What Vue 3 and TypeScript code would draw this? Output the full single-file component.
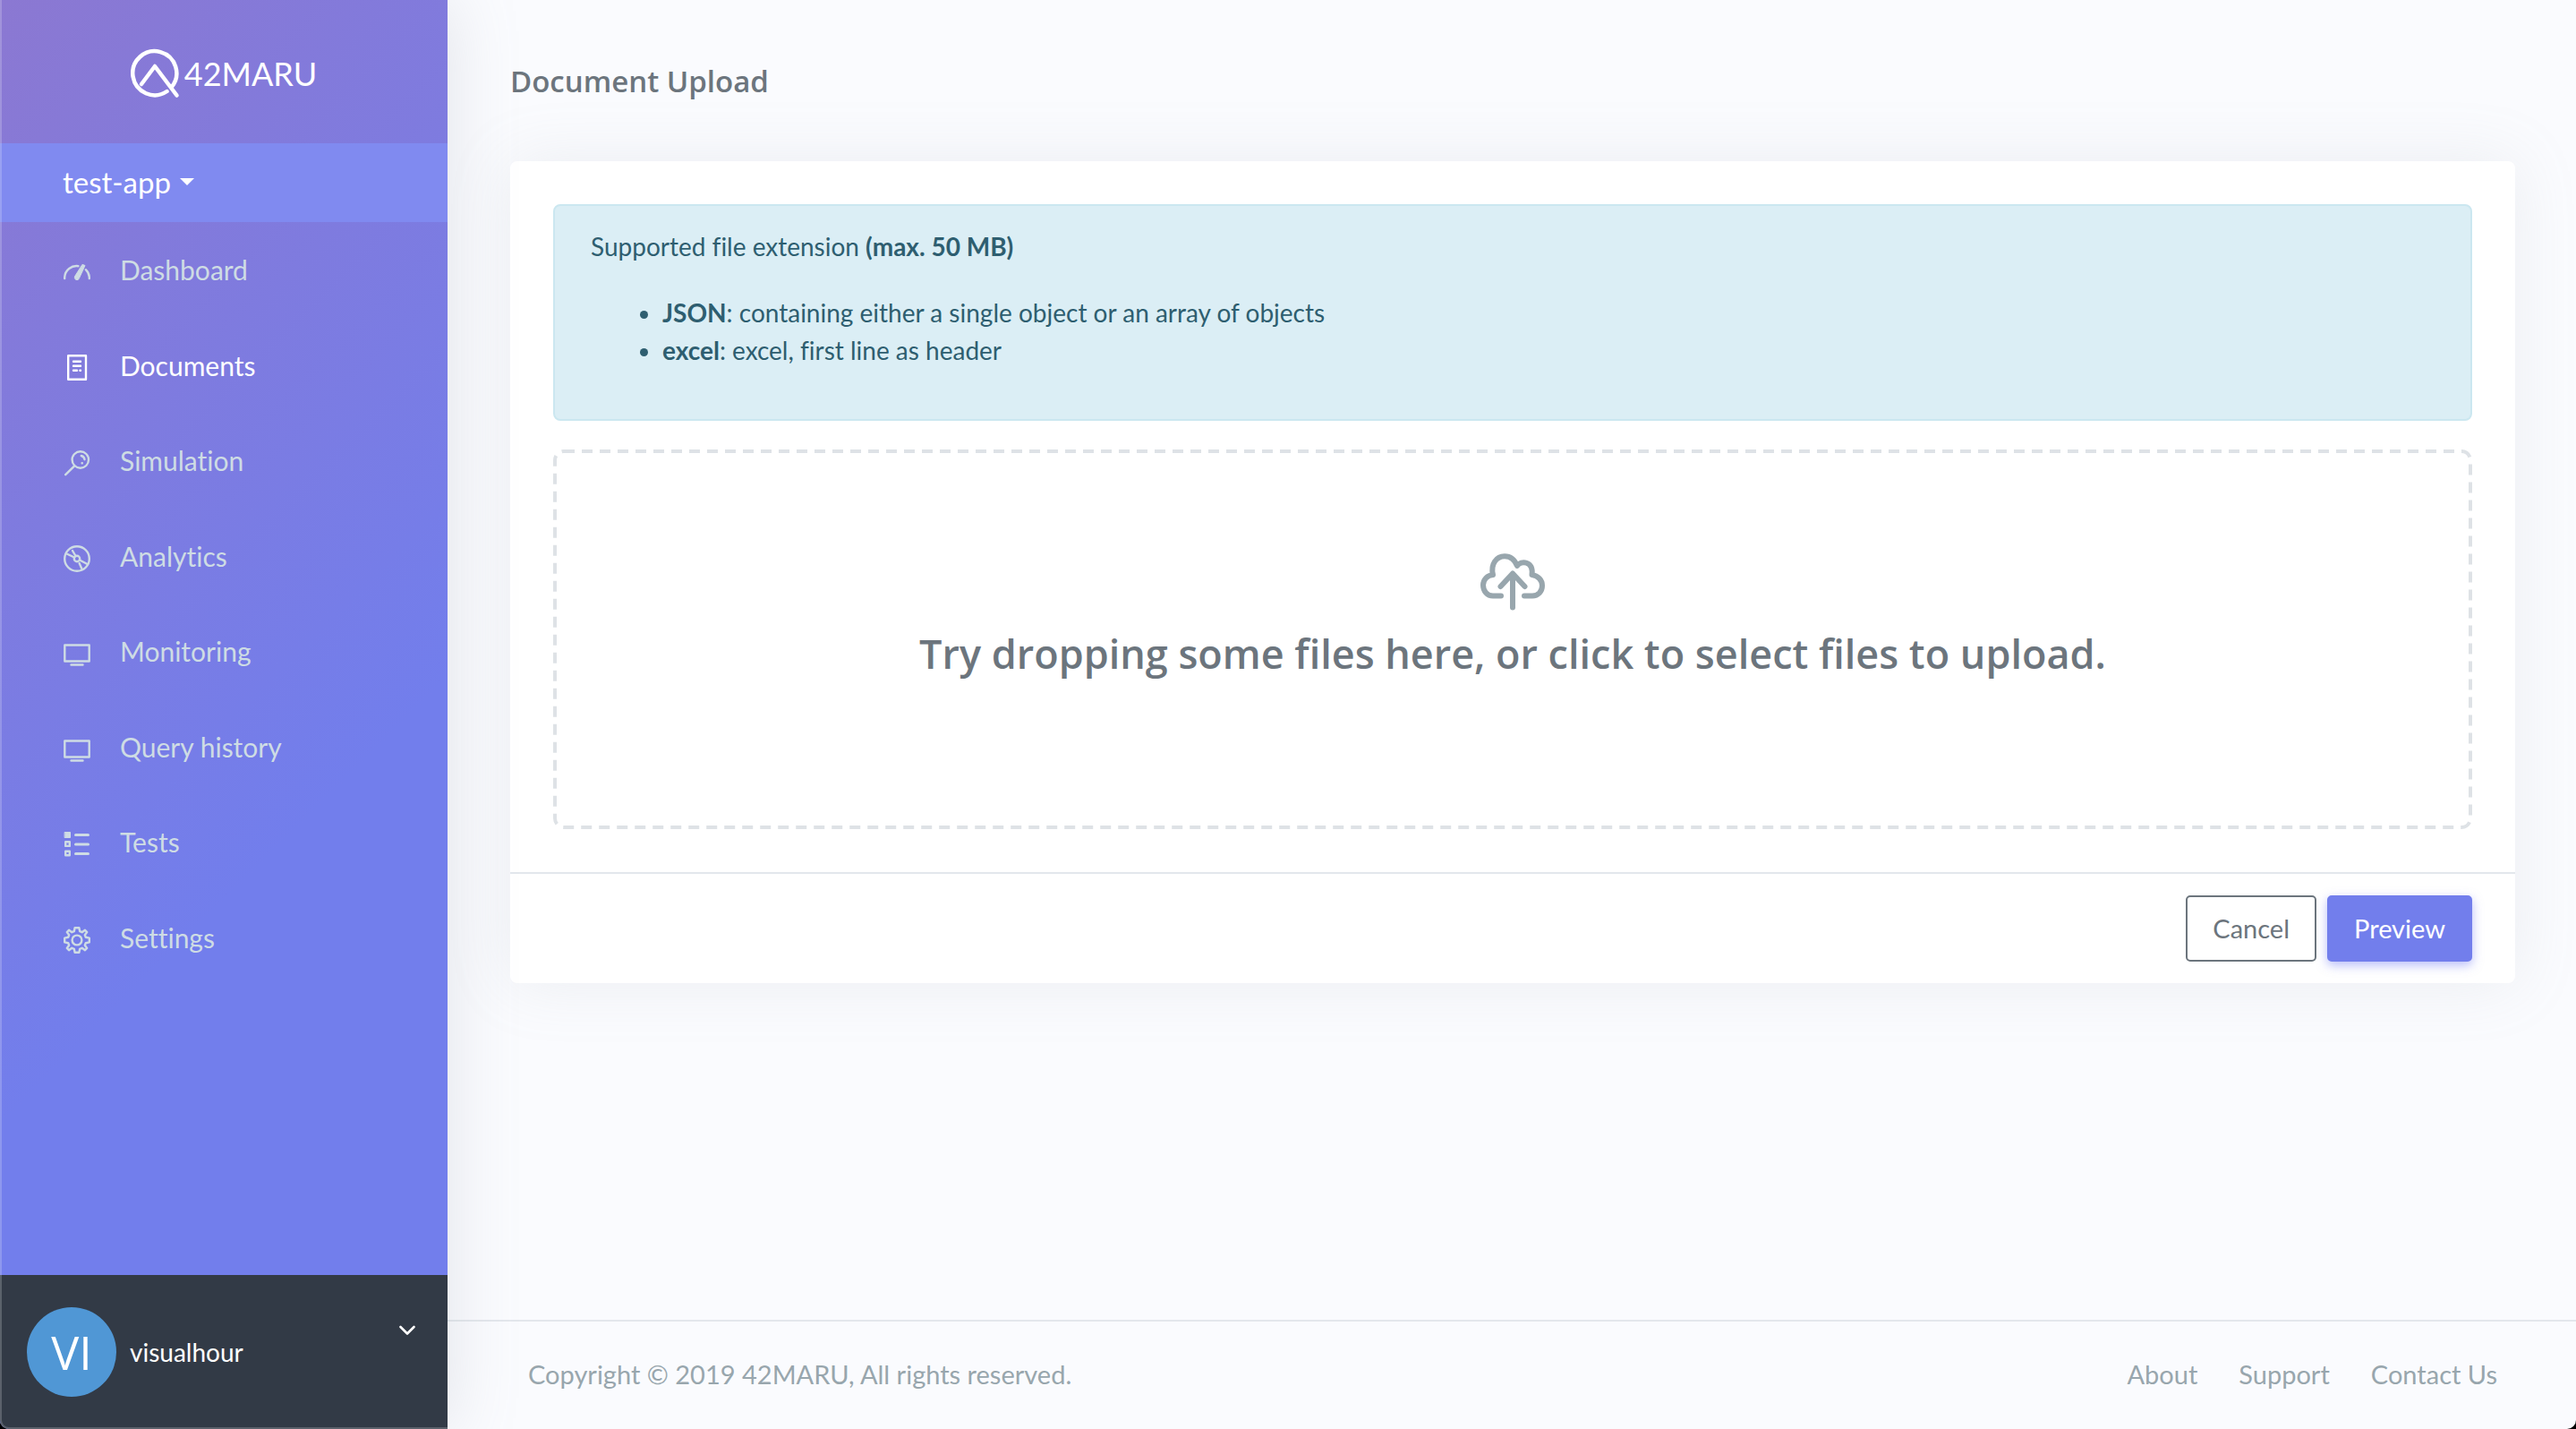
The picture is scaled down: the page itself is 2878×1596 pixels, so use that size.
<script setup lang="ts">
import { ref } from 'vue'

type IconName = 'gauge' | 'document' | 'lens' | 'disc' | 'monitor' | 'checklist' | 'gear'

interface NavItem {
  label: string
  icon: IconName
}

const navItems: NavItem[] = [
  { label: 'Dashboard', icon: 'gauge' },
  { label: 'Documents', icon: 'document' },
  { label: 'Simulation', icon: 'lens' },
  { label: 'Analytics', icon: 'disc' },
  { label: 'Monitoring', icon: 'monitor' },
  { label: 'Query history', icon: 'monitor' },
  { label: 'Tests', icon: 'checklist' },
  { label: 'Settings', icon: 'gear' },
]

const active = ref('Documents')

const extensions = [
  { name: 'JSON', note: ': containing either a single object or an array of objects' },
  { name: 'excel', note: ': excel, first line as header' },
]

const footerLinks = ['About', 'Support', 'Contact Us']
</script>

<template>
  <div class="shell">
    <aside class="sidebar">
      <a class="brand" href="#">
        <svg class="brand-mark" viewBox="0 0 56 56" aria-hidden="true">
          <path d="M45.500 43.500A24.500 24.500 0 1 0 40.500 48" />
          <path d="M12 40L27 20L51.500 52.500" />
        </svg>
        <span class="brand-name">42MARU</span>
      </a>

      <button class="app-switch" type="button">
        <span>test-app</span>
        <span class="caret"></span>
      </button>

      <nav>
        <ul class="nav">
          <li v-for="item in navItems" :key="item.label">
            <a
              href="#"
              class="nav-link"
              :class="{ active: item.label === active }"
              @click.prevent="active = item.label"
            >
              <svg class="nav-icon" viewBox="0 0 30 30" aria-hidden="true">
                <template v-if="item.icon === 'gauge'">
                  <path d="M1.200 22V20.500A13.500 13.500 0 0 1 16.500 8.200M24.800 12.200A12.500 12.500 0 0 1 28.800 20.500V22" />
                  <path class="solid" d="M21.300 6.500L24 7.500L17.600 21.500A2.700 2.700 0 1 1 12.800 19.300Z" />
                </template>
                <template v-else-if="item.icon === 'document'">
                  <path d="M5.200 1.200H25V27.700H5.200Z" />
                  <path d="M11 7.700H19M11 12.700H19M11 17.700H15M18.400 17.700H19" />
                </template>
                <template v-else-if="item.icon === 'lens'">
                  <circle cx="18.800" cy="11.500" r="9.200" />
                  <path d="M12.200 18.300L2.200 28.200M19.800 7C22 7.600 23.400 9.200 23.500 11.300M20.600 15.200H20.800" />
                </template>
                <template v-else-if="item.icon === 'disc'">
                  <circle cx="15" cy="15" r="13.800" />
                  <circle cx="15" cy="15" r="3.200" />
                  <path d="M3.500 9.500L12 13.500M10 6L13.500 12M26.500 21L18 16.500M17.600 20L20.500 26.500" />
                </template>
                <template v-else-if="item.icon === 'monitor'">
                  <path d="M1.300 5.500H28.700V23.500H1.300ZM8.500 27.500H21.500" />
                </template>
                <template v-else-if="item.icon === 'checklist'">
                  <path class="solid" d="M1.500 1.500H7.500V7.500H1.500Z" />
                  <path d="M2.200 12.300H6.800V16.900H2.200ZM2.200 22.700H6.800V27.300H2.200Z" />
                  <path class="bar" d="M13.500 4.500H27.500M13.500 15H27.500M13.500 25.500H27.500" />
                </template>
                <template v-else>
                  <circle cx="15" cy="15" r="5.400" />
                  <path
                    d="M12.600 1.200H17.400L18.200 5.200L20.700 6.200L24 3.800L26.200 6L23.800 9.300L24.800 11.800L28.800 12.600V17.400L24.800 18.200L23.800 20.700L26.200 24L24 26.200L20.700 23.800L18.200 24.800L17.400 28.800H12.600L11.800 24.800L9.300 23.800L6 26.200L3.800 24L6.200 20.700L5.200 18.200L1.200 17.400V12.600L5.200 11.800L6.200 9.300L3.800 6L6 3.800L9.300 6.200L11.800 5.200Z"
                  />
                </template>
              </svg>
              <span>{{ item.label }}</span>
            </a>
          </li>
        </ul>
      </nav>

      <button class="account" type="button">
        <span class="avatar">VI</span>
        <span class="account-name">visualhour</span>
        <svg class="chevron" viewBox="0 0 18 12" aria-hidden="true">
          <path d="M1.500 2L9 9.500L16.500 2" />
        </svg>
      </button>
    </aside>

    <div class="page">
      <main class="content">
        <h1 class="title">Document Upload</h1>

        <section class="card">
          <div class="card-body">
            <div class="notice">
              <p>Supported file extension <b>(max. 50 MB)</b></p>
              <ul>
                <li v-for="ext in extensions" :key="ext.name"><b>{{ ext.name }}</b>{{ ext.note }}</li>
              </ul>
            </div>

            <label class="dropzone">
              <svg class="dash-frame" aria-hidden="true">
                <rect x="2" y="2" rx="10" />
              </svg>
              <input class="file-input" type="file" multiple />
              <svg class="cloud" viewBox="0 0 72 64" aria-hidden="true">
                <path d="M23 47.500H14C7.500 47.500 3 42 3 35.500C3 29.500 7.500 24.500 14 24C11 12 18 3.200 27 3.200C34 3.200 38.500 7.500 41 14C45 7.500 59.500 8.500 57.500 24C64.500 25 69 30 69 36C69 42.500 64.500 47.500 58 47.500H49" />
                <path d="M36 23.500V60.500M22.500 37L36 22.500L49.500 37" />
              </svg>
              <strong class="drop-text">Try dropping some files here, or click to select files to upload.</strong>
            </label>
          </div>

          <div class="card-footer">
            <button class="btn btn-outline" type="button">Cancel</button>
            <button class="btn btn-primary" type="button">Preview</button>
          </div>
        </section>
      </main>

      <footer class="footer">
        <span>Copyright © 2019 42MARU, All rights reserved.</span>
        <div class="footer-links">
          <a v-for="link in footerLinks" :key="link" href="#">{{ link }}</a>
        </div>
      </footer>
    </div>
  </div>
</template>

<style>
body {
  margin: 0;
  background: #000;
}
</style>

<style scoped>
* {
  box-sizing: border-box;
}

.shell {
  display: flex;
  min-height: 100vh;
  overflow: hidden;
  border-radius: 0 0 10px 10px;
  background: #fafbfe;
  font-family: Lato, sans-serif;
  font-size: 28px;
  font-variant-ligatures: none;
  line-height: 42px;
  color: #6c757d;
}

button {
  border: 0;
  font: inherit;
  cursor: pointer;
}

a {
  color: inherit;
  text-decoration: none;
}

svg {
  flex: none;
  fill: none;
  stroke: currentColor;
  stroke-linecap: round;
  stroke-linejoin: round;
}

.sidebar {
  position: relative;
  z-index: 1;
  display: flex;
  flex-direction: column;
  flex: none;
  width: 500px;
  background: linear-gradient(135deg, #8b78d2 0%, #727eec 60%);
  box-shadow: 0 0 70px rgba(154, 161, 171, 0.25);
  color: #cedce4;
}

/* light window edge along the left and bottom sides */
.sidebar::after {
  content: '';
  position: absolute;
  inset: 0;
  border-left: 2px solid rgba(255, 255, 255, 0.2);
  border-bottom: 2px solid rgba(255, 255, 255, 0.2);
  border-bottom-left-radius: 10px;
  pointer-events: none;
}

.brand {
  display: flex;
  align-items: center;
  justify-content: center;
  gap: 4px;
  height: 160px;
  padding-top: 4px;
  color: #fff;
}

.brand-mark {
  width: 56px;
  height: 56px;
  stroke-width: 4.500;
}

.brand-name {
  font-size: 36px;
}

.app-switch {
  display: flex;
  align-items: center;
  gap: 10px;
  height: 88px;
  padding: 0 70px 2px;
  background: #808af0;
  color: #fff;
  font-size: 33px;
}

.caret {
  border: 8px solid transparent;
  border-top-color: #fff;
  border-bottom: 0;
}

.nav {
  display: grid;
  grid-template-rows: repeat(8, 1fr);
  height: 852px;
  margin: 0;
  padding: 0;
  list-style: none;
}

.nav-link {
  display: flex;
  align-items: center;
  gap: 33px;
  height: 100%;
  padding: 0 71px;
  font-size: 30px;
}

.nav-link.active {
  color: #fff;
}

.nav-icon {
  width: 30px;
  height: 30px;
  margin-top: 6px;
  stroke-width: 2.400;
}

.solid {
  fill: currentColor;
  stroke-width: 1;
}

.bar {
  stroke-width: 3;
}

.account {
  display: flex;
  align-items: center;
  gap: 15px;
  height: 172px;
  margin-top: auto;
  padding: 0 36px 0 30px;
  background: #323a46;
  color: #fff;
  text-align: left;
}

.avatar {
  display: flex;
  align-items: center;
  justify-content: center;
  width: 100px;
  height: 100px;
  border-radius: 50%;
  background: #5097d5;
  font-family: 'Open Sans', sans-serif;
  font-size: 52px;
  font-weight: 500;
}

.account-name {
  flex: 1;
}

.chevron {
  width: 18px;
  height: 12px;
  margin-bottom: 48px;
  stroke-width: 2.600;
}

.page {
  display: flex;
  flex: 1;
  flex-direction: column;
  min-width: 0;
}

.content {
  flex: 1;
  padding: 0 68px 0 70px;
}

.title {
  margin: 0;
  padding: 2px 0 0;
  font-family: 'Open Sans', sans-serif;
  font-size: 33px;
  font-weight: 600;
  line-height: 178px;
}

.card {
  border-radius: 8px;
  background: #fff;
  box-shadow: 0 0 70px rgba(154, 161, 171, 0.15);
}

.card-body {
  display: flex;
  flex-direction: column;
  gap: 32px;
  padding: 48px;
}

.notice {
  padding: 24px 40px;
  border: 2px solid #cbe7f0;
  border-radius: 8px;
  background: #dbeef5;
  color: #2e5e70;
}

.notice p {
  margin: 0 0 32px;
}

.notice ul {
  margin: 0 0 32px;
  padding-left: 80px;
}

.dropzone {
  position: relative;
  display: flex;
  flex-direction: column;
  align-items: center;
  gap: 16px;
  height: 424px;
  padding-top: 116px;
  cursor: pointer;
}

.dash-frame {
  position: absolute;
  inset: 0;
  width: 100%;
  height: 100%;
  color: #dee2e6;
  stroke-width: 4;
  stroke-dasharray: 12 8;
  stroke-linecap: butt;
}

.dash-frame rect {
  width: calc(100% - 4px);
  height: calc(100% - 4px);
}

.file-input {
  position: absolute;
  width: 1px;
  height: 1px;
  opacity: 0;
}

.cloud {
  width: 72px;
  height: 64px;
  color: #98a6ad;
  stroke-width: 6;
}

.drop-text {
  font-family: 'Open Sans', sans-serif;
  font-size: 45px;
  font-weight: 600;
  line-height: 64px;
}

.card-footer {
  display: flex;
  justify-content: flex-end;
  gap: 12px;
  padding: 24px 48px;
  border-top: 2px solid #e3e7ec;
}

.btn {
  height: 74px;
  padding: 0 28px;
  border: 2px solid #6c757d;
  border-radius: 5px;
  background: #fff;
  color: #6c757d;
  font-size: 29px;
}

.btn-primary {
  border-color: #727eec;
  background: #727eec;
  box-shadow: 0 4px 12px rgba(114, 124, 245, 0.5);
  color: #fff;
}

.footer {
  display: flex;
  justify-content: space-between;
  padding: 38px 88px 40px 90px;
  border-top: 2px solid #e3e7ec;
  color: #98a6ad;
  font-size: 29px;
}

.footer-links {
  display: flex;
  gap: 46px;
}
</style>
